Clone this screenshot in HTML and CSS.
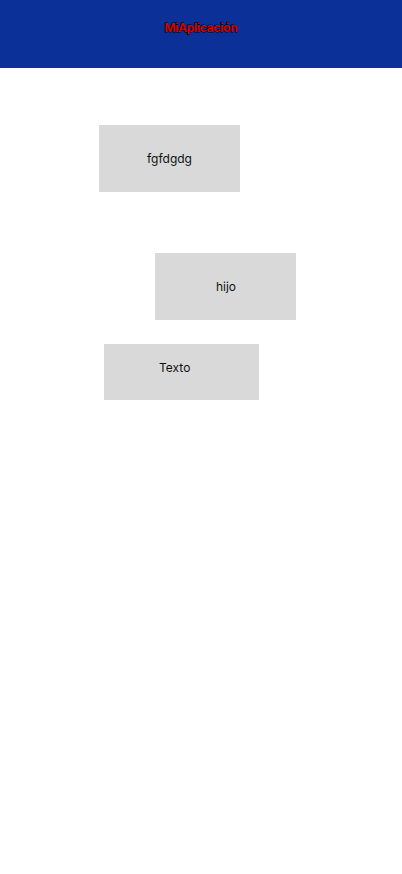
FILE: index.html
```html
<!DOCTYPE html>
<html lang="es">
<head>
<meta charset="utf-8">
<title>MiAplicación</title>
<link rel="stylesheet" href="styles.css">
</head>
<body>
<header class="appbar"><h1 class="title">MiAplicación</h1></header>
<main class="canvas">
  <div class="box box-a">fgfdgdg</div>
  <div class="box box-b">hijo</div>
  <div class="box box-c"><span class="box-c-text">Texto</span></div>
</main>
</body>
</html>
```
FILE: styles.css
```css
* { box-sizing: border-box; }
html, body { margin: 0; padding: 0; background: #ffffff; }
body { font-family: Inter, "Noto Sans", sans-serif; width: 402px; height: 874px; overflow: hidden; }
.appbar {
  height: 68px;
  background: #0b3199;
  display: flex;
  justify-content: center;
  padding-top: 20px;
}
.title {
  margin: 0;
  font-family: Inter, sans-serif;
  font-size: 12px;
  line-height: 16px;
  font-weight: 600;
  color: #e00000;
  -webkit-text-stroke: 1.1px #000;
  paint-order: stroke fill;
  letter-spacing: -0.2px;
}
.canvas { display: flex; flex-direction: column; align-items: flex-start; }
.box {
  background: #d9d9d9;
  color: #111;
  font-size: 12px;
  display: flex;
  align-items: center;
  justify-content: center;
}
.box-a { width: 141px; height: 67px; margin: 57px 0 0 99px; }
.box-b { width: 141px; height: 67px; margin: 61px 0 0 155px; padding-left: 1px; }
.box-c { width: 155px; height: 56px; margin: 24px 0 0 104px; justify-content: flex-start; align-items: flex-start; padding: 16px 0 0 55px; }
.box-c-text { line-height: 16px; }
```
